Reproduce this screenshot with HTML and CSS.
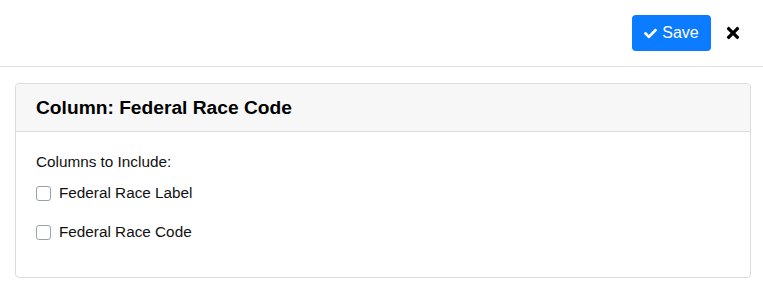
FILE: index.html
```html
<!DOCTYPE html>
<html>
<head>
<meta charset="utf-8">
<link rel="stylesheet" href="styles.css">
</head>
<body>
<div class="topbar">
  <button class="btn-save">
    <svg class="check" viewBox="0 0 512 512" width="13" height="13"><path fill="#fff" d="M173.9 439.4l-166.4-166.4c-10-10-10-26.2 0-36.2l36.2-36.2c10-10 26.2-10 36.2 0L192 312.7 432.1 72.6c10-10 26.2-10 36.2 0l36.2 36.2c10 10 10 26.2 0 36.2L210.1 439.4c-10 10-26.2 10-36.2 0z"/></svg>
    <span>Save</span>
  </button>
  <button class="btn-close" aria-label="Close">
    <svg viewBox="0 0 352 512" width="14" height="18"><path fill="#000" d="M242.7 256l100.1-100.1c12.3-12.3 12.3-32.2 0-44.5l-22.2-22.2c-12.3-12.3-32.2-12.3-44.5 0L176 189.3 75.9 89.2c-12.3-12.3-32.2-12.3-44.5 0L9.2 111.4c-12.3 12.3-12.3 32.2 0 44.5L109.3 256 9.2 356.1c-12.3 12.3-12.3 32.2 0 44.5l22.2 22.2c12.3 12.3 32.2 12.3 44.5 0L176 322.7l100.1 100.1c12.3 12.3 32.2 12.3 44.5 0l22.2-22.2c12.3-12.3 12.3-32.2 0-44.5L242.7 256z"/></svg>
  </button>
</div>
<div class="card">
  <div class="card-header">Column: Federal Race Code</div>
  <div class="card-body">
    <div class="label">Columns to Include:</div>
    <label class="check-row"><span class="box"></span><span>Federal Race Label</span></label>
    <label class="check-row"><span class="box"></span><span>Federal Race Code</span></label>
  </div>
</div>
</body>
</html>
```

FILE: styles.css
```css
* { box-sizing: border-box; }
body {
  margin: 0;
  font-family: "Liberation Sans", Arial, sans-serif;
  color: #212529;
  background: #fff;
}
.topbar {
  height: 67px;
  border-bottom: 1px solid #e3e3e6;
  display: flex;
  align-items: flex-start;
  justify-content: flex-end;
  padding: 15px 22px 0 0;
  gap: 14px;
}
.btn-save {
  height: 36px;
  width: 79px;
  border: none;
  border-radius: 4px;
  background: #0b7bff;
  color: #fff;
  font-family: inherit;
  font-size: 16px;
  display: flex;
  align-items: center;
  justify-content: center;
  gap: 5px;
  padding: 0;
}
.btn-close {
  border: none;
  background: none;
  padding: 0;
  height: 36px;
  width: 16px;
  display: flex;
  align-items: center;
  justify-content: center;
}
.card {
  margin: 16px 12px 0 15px;
  border: 1px solid #dcdcdf;
  border-radius: 4px;
  height: 195px;
}
.card-header {
  height: 48px;
  background: #f7f7f7;
  border-bottom: 1px solid #dcdcdf;
  border-radius: 4px 4px 0 0;
  padding: 0 20px;
  display: flex;
  align-items: center;
  font-size: 19.2px;
  font-weight: bold;
  color: #000;
}
.card-body {
  padding: 20px 20px;
  font-size: 15.3px;
  color: #111;
}
.label {
  height: 20px;
  line-height: 20px;
}
.check-row {
  display: flex;
  align-items: center;
  gap: 8px;
  height: 20px;
  margin-top: 11px;
}
.check-row + .check-row { margin-top: 19px; }
.box {
  width: 15px;
  height: 15px;
  border: 1px solid #9aa1aa;
  border-radius: 3px;
  background: #fff;
}
```
